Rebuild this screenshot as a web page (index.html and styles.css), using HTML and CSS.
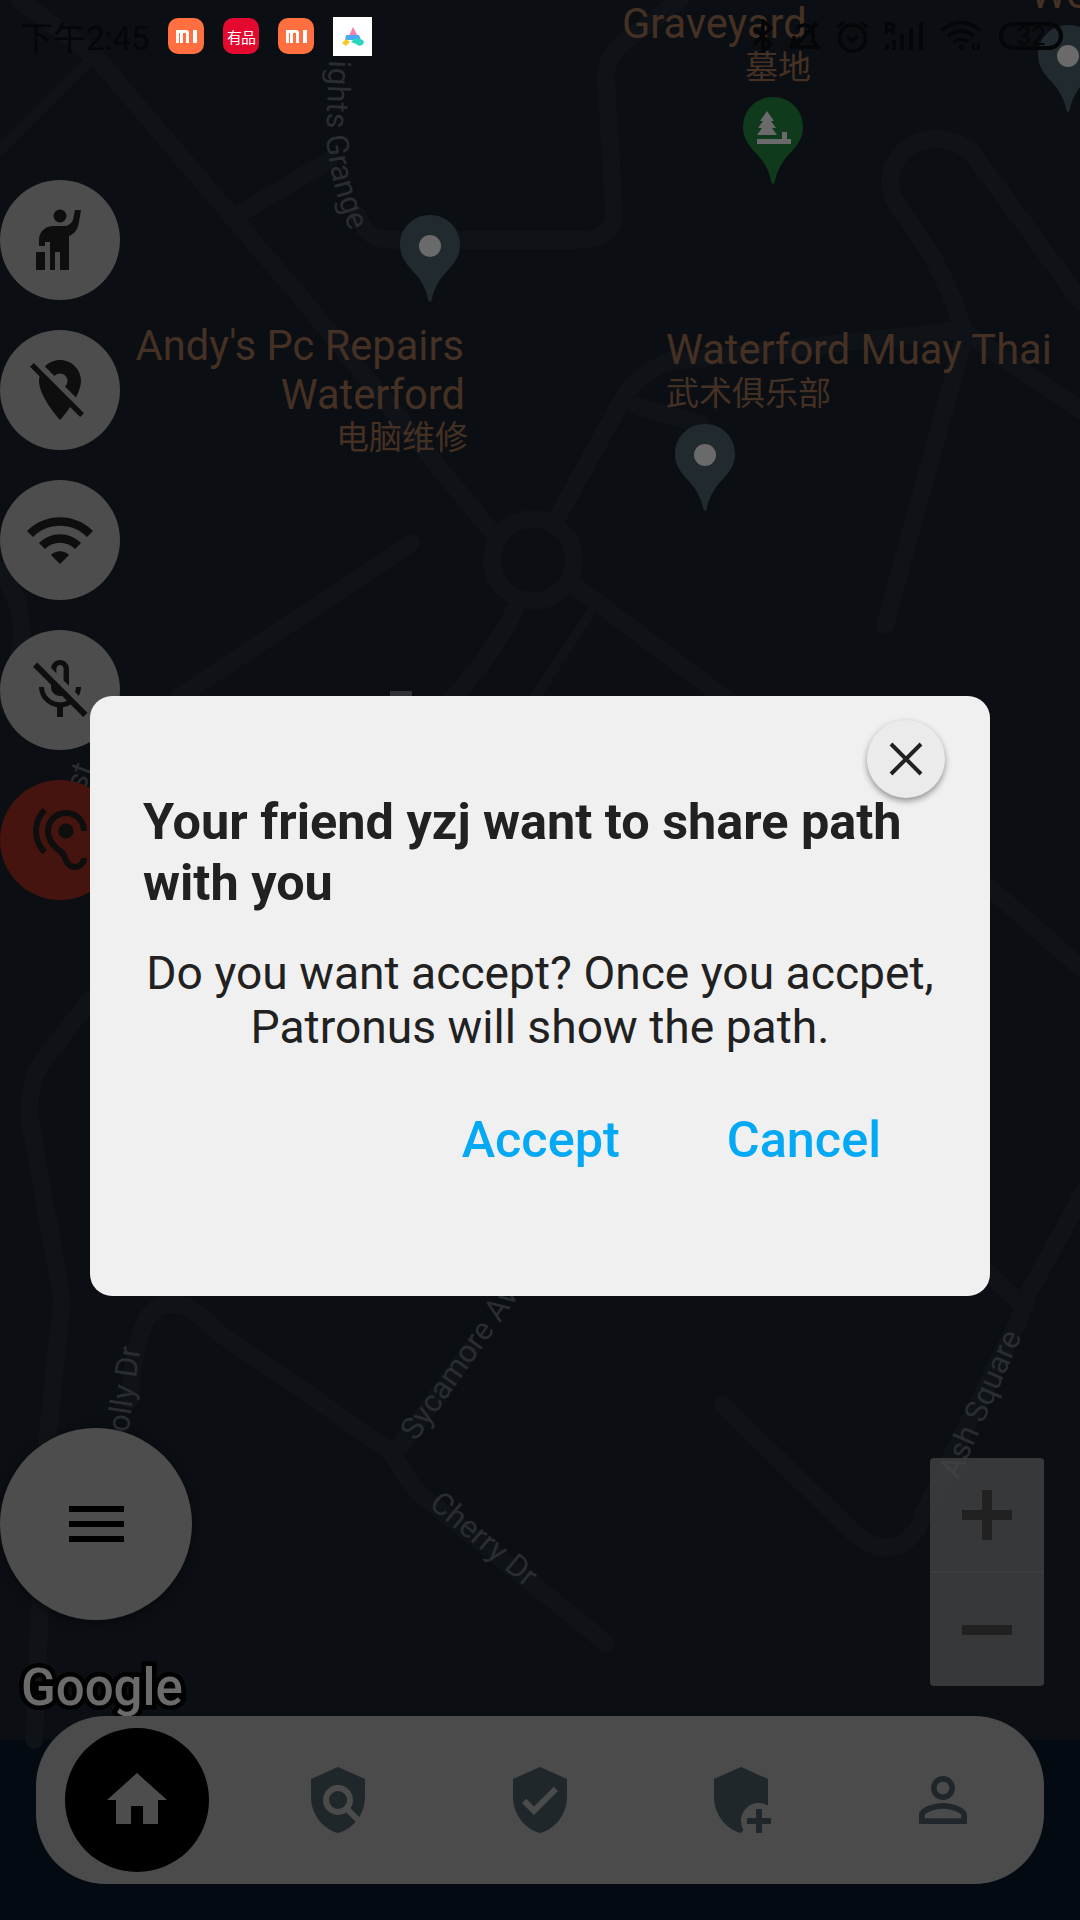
FILE: index.html
```html
<!DOCTYPE html>
<html>
<head>
    <title>Patronus</title>
    <link rel="stylesheet" href="styles.css">
</head>
<body>
    <div class="screen">
        <svg class="map" width="1080" height="1920" viewBox="0 0 1080 1920">
            <defs>
                <path id="pin" d="M30 0C13 0 0 13 0 30c0 15 10 22 18 32 6 8 9 16 10 22 1 4 3 4 4 0 1-6 4-14 10-22 8-10 18-17 18-32C60 13 47 0 30 0z"/>
                <path id="street-knights" d="M329 60L326 135Q330 190 356 245"/>
                <path id="street-holly" d="M125 1455L143 1330"/>
                <path id="street-sycamore" d="M416 1442L530 1280"/>
                <path id="street-cherry" d="M428 1506L534 1594"/>
                <path id="street-ash" d="M958 1480L1028 1322"/>
                <path id="street-left" d="M84 792L100 750"/>
            </defs>

            <rect class="band-bottom" x="0" y="1740" width="1080" height="180"/>

            <g class="roads">
                <path d="M20 0L96 57L303 300L490 530"/>
                <path d="M241 213L330 160"/>
                <path class="thin" d="M0 150L93 57"/>
                <path d="M358 215C365 235 375 240 395 240H575C600 240 615 232 614 210L606 80Q605 60 620 45L680 0"/>
                <path d="M1080 300L970 150Q930 125 900 155Q880 180 900 210Q945 265 965 335L885 625"/>
                <path d="M555 522L626 393Q640 375 666 362L962 330L1080 410"/>
                <path d="M637 406L700 424"/>
                <circle cx="533" cy="560" r="41"/>
                <path d="M574 585L730 702"/>
                <path class="thin" d="M592 611L533 700"/>
                <path d="M515 610Q490 660 450 700"/>
                <path d="M411 543L180 696"/>
                <path d="M0 570Q28 610 20 650Q15 680 0 700"/>
                <path d="M990 888L1080 967"/>
                <path d="M990 1275L1022 1305L1085 1190"/>
                <path d="M723 1405L854 1533Q880 1555 900 1545Q918 1535 923 1515L1019 1320L1026 1300"/>
                <path d="M130 1400Q135 1310 165 1305Q190 1300 215 1330L392 1452Q410 1490 434 1505L606 1643"/>
                <path d="M400 1447L470 1350"/>
                <path d="M90 1000L40 1065Q28 1085 30 1120L62 1300L48 1433L34 1740"/>
            </g>

            <rect class="street-mark" x="390" y="691" width="22" height="6"/>
            <text class="street"><textPath href="#street-knights">ights Grange</textPath></text>
            <text class="street"><textPath href="#street-holly">Holly Dr</textPath></text>
            <text class="street"><textPath href="#street-sycamore">Sycamore Ave</textPath></text>
            <text class="street"><textPath href="#street-cherry">Cherry Dr</textPath></text>
            <text class="street"><textPath href="#street-ash">Ash Square</textPath></text>
            <text class="street"><textPath href="#street-left">st</textPath></text>

            <text class="place" x="622" y="38">Graveyard</text>
            <text class="place-cn" x="745" y="79">墓地</text>
            <text class="place" x="1030" y="8">We</text>
            <text class="place end" x="464" y="360">Andy's Pc Repairs</text>
            <text class="place end" x="465" y="409">Waterford</text>
            <text class="place-cn end" x="468" y="449">电脑维修</text>
            <text class="place" x="666" y="364">Waterford Muay Thai</text>
            <text class="place-cn" x="666" y="405">武术俱乐部</text>

            <use class="pin" href="#pin" x="400" y="215"/>
            <ellipse class="pin-dot" cx="430" cy="246" rx="11" ry="11"/>
            <use class="pin" href="#pin" x="675" y="424"/>
            <ellipse class="pin-dot" cx="705" cy="455" rx="11" ry="11"/>
            <use class="pin" href="#pin" x="1038" y="25"/>
            <ellipse class="pin-dot" cx="1068" cy="56" rx="11" ry="11"/>
            <use class="pin-green" href="#pin" x="743" y="97"/>
            <path class="pin-dot" d="M767 111l7 10h-3l5 7h-4l5 7h-20l5-7h-4l5-7h-3zM757 139h34v5h-34zM782 132h5v7h-5z"/>

            <text class="google" x="21" y="1705">Google</text>
        </svg>

        <div class="status-bar">
            <div class="status-left">
                <span class="time">下午2:45</span>
                <svg class="app-icon app-mi" width="36" height="36" viewBox="0 0 36 36"><path d="M8 12h10q3 0 3 3v10h-3V15h-3v10h-3V15h-1v10H8zM25 12h4v13h-4z"/></svg>
                <span class="app-icon app-youpin">有品</span>
                <svg class="app-icon app-mi" width="36" height="36" viewBox="0 0 36 36"><path d="M8 12h10q3 0 3 3v10h-3V15h-3v10h-3V15h-1v10H8zM25 12h4v13h-4z"/></svg>
                <svg class="app-white" width="39" height="39" viewBox="0 0 39 39">
                    <rect width="39" height="39" fill="#fff"/>
                    <path d="M20 10l7 13h-13z" fill="#f77fb0"/>
                    <path d="M13 18h13l2 5h-16z" fill="#4aa8f5"/>
                    <path d="M13 22l4 3-4 4-4-3z" fill="#f7c928"/>
                    <path d="M22 21l8 2q2 3-1 5-3 2-6-1l-5-2z" fill="#2ad6c0"/>
                </svg>
            </div>
            <div class="status-right">
                <svg width="20" height="34" viewBox="0 0 20 34"><path class="line" d="M1 9l17 16-8 7V2l8 7L1 25"/></svg>
                <svg width="32" height="30" viewBox="0 0 32 30"><path class="line" d="M2 26h28l-5-6v-7q0-8-8-9-5 0-8 4M6 15v5l-3 4M29 2L4 28"/></svg>
                <svg width="35" height="33" viewBox="0 0 35 33"><circle class="line" cx="17.500" cy="18" r="13"/><path class="line" d="M3 7l6-5M32 7l-6-5M12 16l5.500 5 5.500-5"/></svg>
                <svg width="40" height="28" viewBox="0 0 40 28"><path d="M0 22h4v6H0zM7 18h4v10H7zM15 12h4v16h-4zM24 6h4v22h-4zM34 0h4v28h-4z"/><path class="line-thin" d="M1 12V2h5q3 0 3 3t-3 3H1M6 8l3 4"/></svg>
                <svg width="44" height="32" viewBox="0 0 44 32"><path class="line" d="M2 10q19-15 38 0M8 16q13-10 26 0M14 22q7-5 14 0"/><path d="M21 24l3.500 3-3.500 3-3.500-3z"/><path d="M32 23h3v7h-3zM37 23h3v7h-3z"/></svg>
                <span class="battery">32</span>
            </div>
        </div>

        <div class="side-buttons">
            <div class="round-button">
                <svg width="120" height="120" viewBox="0 0 120 120">
                    <circle cx="60" cy="36" r="6.500"/>
                    <path d="M39 66V60C39 52 45 46 54 46H64C68 46 71 44 73 40L75 30H81L79 42C78 50 74 54 69 56V90H60V72H55V90H50V62H45V66z"/>
                    <path d="M36 72h9v18h-9z"/>
                </svg>
            </div>
            <div class="round-button">
                <svg width="72" height="72" viewBox="0 0 24 24"><path d="M12 6.500c1.380 0 2.500 1.120 2.500 2.500 0 .74-.33 1.390-.83 1.850l3.630 3.630c.98-1.860 1.700-3.800 1.700-5.480 0-3.870-3.130-7-7-7-1.980 0-3.760.83-5.040 2.150l3.190 3.190c.46-.52 1.110-.84 1.850-.84zm4.370 9.600l-4.630-4.630-.11-.11L3.270 3 2 4.270l3.180 3.180C5.070 7.950 5 8.470 5 9c0 5.250 7 13 7 13s1.670-1.850 3.380-4.350L18.730 21 20 19.730l-3.630-3.630z"/></svg>
            </div>
            <div class="round-button">
                <svg width="72" height="72" viewBox="0 0 24 24"><path d="M1 9l2 2c4.970-4.970 13.030-4.970 18 0l2-2C16.930 2.930 7.080 2.930 1 9zm8 8l3 3 3-3c-1.650-1.660-4.340-1.660-6 0zm-4-4l2 2c2.760-2.760 7.240-2.760 10 0l2-2C15.140 9.140 8.870 9.140 5 13z"/></svg>
            </div>
            <div class="round-button">
                <svg width="72" height="72" viewBox="0 0 24 24"><path d="M10.800 4.900c0-.66.54-1.200 1.200-1.200s1.200.54 1.200 1.200l-.01 3.910L15 10.600V5c0-1.660-1.340-3-3-3-1.540 0-2.790 1.160-2.960 2.650l1.760 1.760V4.900zM19 11h-1.700c0 .58-.1 1.130-.27 1.640l1.270 1.270c.44-.88.7-1.870.7-2.910zM4.410 2.860L3 4.270l6 6V11c0 1.660 1.340 3 3 3 .23 0 .44-.03.65-.08l1.660 1.660c-.71.33-1.500.52-2.310.52-2.760 0-5.300-2.100-5.300-5.100H5c0 3.410 2.720 6.230 6 6.720V21h2v-3.280c.91-.13 1.770-.47 2.550-.9l4.180 4.180 1.410-1.410L4.410 2.860z"/></svg>
            </div>
            <div class="round-button red">
                <svg width="72" height="72" viewBox="0 0 24 24"><path d="M17 20c-.29 0-.56-.06-.76-.15-.71-.37-1.210-.88-1.710-2.380-.51-1.560-1.470-2.290-2.390-3-.79-.61-1.610-1.240-2.320-2.530C9.290 10.980 9 9.930 9 9c0-2.800 2.200-5 5-5s5 2.200 5 5h2c0-3.930-3.070-7-7-7S7 5.070 7 9c0 1.260.38 2.650 1.070 3.900.91 1.650 1.980 2.480 2.850 3.150.81.62 1.390 1.070 1.710 2.050.6 1.820 1.370 2.840 2.730 3.550.51.23 1.070.35 1.640.35 2.210 0 4-1.790 4-4h-2c0 1.100-.9 2-2 2zM7.640 2.640L6.220 1.220C4.230 3.210 3 5.960 3 9s1.230 5.790 3.220 7.780l1.410-1.410C6.010 13.740 5 11.490 5 9s1.010-4.740 2.640-6.360zM11.500 9c0 1.380 1.120 2.500 2.500 2.500s2.500-1.120 2.500-2.500-1.120-2.500-2.500-2.500-2.500 1.120-2.500 2.500z"/></svg>
            </div>
        </div>

        <div class="menu-button">
            <span class="menu-line"></span>
            <span class="menu-line"></span>
            <span class="menu-line"></span>
        </div>

        <div class="zoom-panel">
            <div class="zoom-key">
                <svg width="50" height="50" viewBox="0 0 50 50"><path d="M20 0h10v20h20v10H30v20H20V30H0V20h20z"/></svg>
            </div>
            <div class="zoom-key">
                <svg width="50" height="10" viewBox="0 0 50 10"><path d="M0 0h50v10H0z"/></svg>
            </div>
        </div>

        <nav class="bottom-nav">
            <div class="nav-home">
                <svg width="72" height="72" viewBox="0 0 24 24"><path d="M10 20v-6h4v6h5v-8h3L12 3 2 12h3v8z"/></svg>
            </div>
            <div class="nav-item">
                <svg width="72" height="72" viewBox="0 0 24 24"><path d="M21 5l-9-4-9 4v6c0 5.550 3.840 10.740 9 12 2.300-.56 4.330-1.900 5.880-3.710l-3.120-3.120c-1.940 1.290-4.580 1.070-6.290-.64-1.950-1.950-1.950-5.120 0-7.070 1.950-1.950 5.120-1.950 7.070 0 1.710 1.710 1.920 4.350.64 6.290l2.900 2.900C20.290 15.690 21 13.380 21 11V5z"/><circle cx="12" cy="12" r="3"/></svg>
            </div>
            <div class="nav-item">
                <svg width="72" height="72" viewBox="0 0 24 24"><path d="M12 1L3 5v6c0 5.550 3.840 10.740 9 12 5.160-1.260 9-6.450 9-12V5l-9-4zm-2 16l-4-4 1.410-1.410L10 14.170l6.590-6.590L18 9l-8 8z"/></svg>
            </div>
            <div class="nav-item">
                <svg width="72" height="72" viewBox="0 0 24 24"><path d="M12 1L3 5v6c0 5.550 3.840 10.740 9 12l.8-1A6 6 0 0 1 21 13.800V5z"/><path d="M17 15h2v3h3v2h-3v3h-2v-3h-3v-2h3z"/></svg>
            </div>
            <div class="nav-item">
                <svg width="72" height="72" viewBox="0 0 24 24"><path d="M12 5.900c1.160 0 2.100.94 2.100 2.100s-.94 2.100-2.100 2.100S9.900 9.160 9.900 8s.94-2.100 2.100-2.100m0 9c2.970 0 6.100 1.460 6.100 2.100v1.100H5.900V17c0-.64 3.130-2.100 6.100-2.100M12 4C9.790 4 8 5.790 8 8s1.790 4 4 4 4-1.790 4-4-1.790-4-4-4zm0 9c-2.670 0-8 1.340-8 4v3h16v-3c0-2.660-5.330-4-8-4z"/></svg>
            </div>
        </nav>

        <div class="dialog">
            <div class="close-button">
                <svg width="34" height="34" viewBox="0 0 34 34"><path d="M2 2l30 30M32 2L2 32"/></svg>
            </div>
            <h2 class="dialog-title">Your friend yzj want to share path with you</h2>
            <p class="dialog-text">Do you want accept? Once you accpet, Patronus will show the path.</p>
            <div class="dialog-actions">
                <span class="dialog-action">Accept</span>
                <span class="dialog-action">Cancel</span>
            </div>
        </div>
    </div>
</body>
</html>
```

FILE: styles.css
```css
body {
    margin: 0;
    padding: 0;
    background-color: #0b0e13;
    font-family: Roboto, "Noto Sans CJK SC", sans-serif;
}

.screen {
    position: relative;
    width: 1080px;
    height: 1920px;
    overflow: hidden;
    background-color: #0b0e13;
}

/* map canvas */
.map {
    position: absolute;
    left: 0;
    top: 0;
}

.band-bottom {
    fill: #030a11;
}

.roads path,
.roads circle {
    fill: none;
    stroke: #0f1317;
    stroke-width: 18;
    stroke-linecap: round;
    stroke-linejoin: round;
}

.roads .thin {
    stroke-width: 10;
}

.street {
    font-family: Roboto, sans-serif;
    font-size: 31px;
    fill: #2a2d30;
}

.street-mark {
    fill: #2f3235;
}

.place {
    font-family: Roboto, sans-serif;
    font-size: 41.600px;
    fill: #453124;
}

.place-cn {
    font-family: "Noto Sans CJK SC", sans-serif;
    font-size: 33px;
    fill: #453124;
}

.end {
    text-anchor: end;
}

.pin {
    fill: #212a2e;
}

.pin-green {
    fill: #0f3a1c;
}

.pin-dot {
    fill: #6a6a6a;
}

.google {
    font-family: Roboto, sans-serif;
    font-size: 51px;
    font-weight: 500;
    fill: #6b6b6b;
    stroke: #000;
    stroke-width: 9px;
    paint-order: stroke fill;
}

/* status bar */
.status-bar {
    position: absolute;
    left: 0;
    top: 0;
    width: 1080px;
    height: 72px;
    display: flex;
    justify-content: space-between;
    align-items: center;
    padding: 0 17px 0 20px;
    box-sizing: border-box;
}

.status-left,
.status-right {
    display: flex;
    align-items: center;
}

.time {
    width: 148px;
    font-size: 33px;
    color: #050608;
}

.app-icon {
    display: flex;
    justify-content: center;
    align-items: center;
    width: 36px;
    height: 36px;
    margin-right: 19px;
    border-radius: 10px;
}

.app-mi {
    background-color: #ff6f3f;
    fill: #fff;
}

.app-youpin {
    background-color: #e4092f;
    color: #fff;
    font-size: 15px;
    letter-spacing: -1px;
    font-family: "Noto Sans CJK SC", sans-serif;
    white-space: nowrap;
}

.status-right {
    gap: 15px;
}

.status-right svg {
    fill: #050608;
}

.line,
.line-thin {
    fill: none;
    stroke: #050608;
    stroke-width: 3.500;
}

.line-thin {
    stroke-width: 3;
}

.battery {
    width: 64px;
    height: 28px;
    box-sizing: border-box;
    border: 4px solid #050608;
    border-radius: 14px;
    color: #050608;
    font-size: 26px;
    line-height: 20px;
    text-align: center;
}

/* left column */
.side-buttons {
    position: absolute;
    left: 0;
    top: 180px;
    display: flex;
    flex-direction: column;
    gap: 30px;
}

.round-button {
    display: flex;
    justify-content: center;
    align-items: center;
    width: 120px;
    height: 120px;
    border-radius: 50%;
    background-color: #4d4d4d;
    fill: #0e0e0e;
}

.round-button.red {
    background-color: #46140f;
}

.menu-button {
    position: absolute;
    left: 0;
    top: 1428px;
    display: flex;
    flex-direction: column;
    justify-content: center;
    align-items: center;
    gap: 9px;
    width: 192px;
    height: 192px;
    border-radius: 50%;
    background-color: #4d4d4d;
    box-shadow: 0 3px 10px rgba(0, 0, 0, 0.4);
}

.menu-line {
    width: 55px;
    height: 6px;
    background-color: #000;
}

/* map zoom */
.zoom-panel {
    position: absolute;
    left: 930px;
    top: 1458px;
    width: 114px;
    height: 228px;
    border-radius: 4px;
    background-color: rgba(73, 74, 75, 0.7);
    fill: #212121;
}

.zoom-key {
    display: flex;
    justify-content: center;
    align-items: center;
    height: 114px;
}

.zoom-key:first-child {
    border-bottom: 2px solid #3c3d3e;
    height: 113px;
}

/* bottom nav */
.bottom-nav {
    position: absolute;
    left: 36px;
    top: 1716px;
    display: flex;
    align-items: center;
    width: 1008px;
    height: 168px;
    padding-left: 29px;
    box-sizing: border-box;
    border-radius: 70px;
    background-color: #4b4b4b;
}

.nav-home {
    display: flex;
    justify-content: center;
    align-items: center;
    flex: none;
    width: 144px;
    height: 144px;
    margin-right: 93px;
    border-radius: 50%;
    background-color: #000;
    fill: #4d4d4d;
}

.nav-item {
    display: flex;
    justify-content: center;
    flex: none;
    width: 72px;
    margin-right: 129.500px;
    fill: #1f272b;
}

/* dialog */
.dialog {
    position: absolute;
    left: 90px;
    top: 696px;
    width: 900px;
    height: 600px;
    padding-top: 95px;
    box-sizing: border-box;
    border-radius: 22px;
    background-color: #f0f0f0;
    color: #212121;
}

.close-button {
    position: absolute;
    left: 777px;
    top: 24px;
    display: flex;
    justify-content: center;
    align-items: center;
    width: 78px;
    height: 78px;
    border-radius: 50%;
    background-color: #ebebeb;
    box-shadow: 0 3px 6px rgba(0, 0, 0, 0.4);
}

.close-button path {
    fill: none;
    stroke: #212121;
    stroke-width: 4;
}

.dialog-title {
    margin: 0;
    padding: 0 53px;
    font-size: 50.400px;
    font-weight: 700;
    line-height: 61px;
}

.dialog-text {
    margin: 33px 0 0;
    padding: 0 40px;
    font-size: 46.200px;
    line-height: 54px;
    text-align: center;
}

.dialog-actions {
    display: flex;
    justify-content: flex-end;
    gap: 107px;
    margin-top: 56px;
    padding-right: 109px;
}

.dialog-action {
    font-size: 50.400px;
    font-weight: 500;
    color: #03a9f4;
}
```
